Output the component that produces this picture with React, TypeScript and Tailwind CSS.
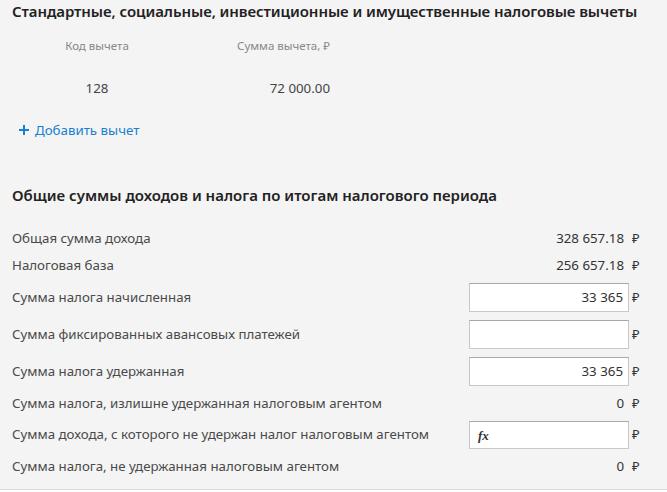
import React from "react";

const font = { fontFamily: '"Noto Sans", "Open Sans", sans-serif' };

type Row = { label: string; value?: string; input?: boolean; fx?: boolean };

const rows: Row[] = [
  { label: "Общая сумма дохода", value: "328 657.18" },
  { label: "Налоговая база", value: "256 657.18" },
  { label: "Сумма налога начисленная", value: "33 365", input: true },
  { label: "Сумма фиксированных авансовых платежей", value: "", input: true },
  { label: "Сумма налога удержанная", value: "33 365", input: true },
  { label: "Сумма налога, излишне удержанная налоговым агентом", value: "0" },
  { label: "Сумма дохода, с которого не удержан налог налоговым агентом", value: "", input: true, fx: true },
  { label: "Сумма налога, не удержанная налоговым агентом", value: "0" },
];

function RowView({ r }: { r: Row }) {
  const h = r.input ? (r.fx ? "h-[28px]" : "h-[29px]") : "h-[19px]";
  return (
    <div className={"flex items-center justify-between " + h}>
      <span className="text-[13.3px] text-[#4a4a4a] whitespace-nowrap">{r.label}</span>
      <div className="flex items-center">
        {r.input ? (
          <div className={"w-[160px] bg-white border border-[#c8c8c8] border-t-[#a8a8a8] flex items-center justify-end px-[5px] relative " + h}>
            {r.fx && (
              <span className="absolute left-[8px] top-[4px] text-[13px] italic font-bold text-[#333]" style={{ fontFamily: '"Liberation Serif", serif' }}>
                fx
              </span>
            )}
            <span className="text-[13.3px] text-[#333]">{r.value}</span>
          </div>
        ) : (
          <span className="text-[13.3px] text-[#333] pr-[5px]">{r.value}</span>
        )}
        <span className="text-[13px] text-[#333] ml-[3px] w-[8px]">₽</span>
      </div>
    </div>
  );
}

export default function App() {
  return (
    <div className="w-[667px] h-[492px] bg-[#f4f4f4] overflow-hidden flex flex-col" style={font}>
      <div className="pl-3 pr-[27px] flex-1">
        <h2 className="text-[15px] font-semibold text-[#222] leading-5 pt-[1px] whitespace-nowrap tracking-[-0.08px]">
          Стандартные, социальные, инвестиционные и имущественные налоговые вычеты
        </h2>
        <div className="grid grid-cols-[170px_148px] mt-[17px]">
          <div className="text-center text-[11.5px] text-[#888] leading-4">Код вычета</div>
          <div className="text-right text-[11.5px] text-[#888] leading-4">Сумма вычета, ₽</div>
        </div>
        <div className="grid grid-cols-[170px_148px] mt-[24px]">
          <div className="text-center text-[13.3px] text-[#444] leading-5">128</div>
          <div className="text-right text-[13.3px] text-[#444] leading-5">72 000.00</div>
        </div>
        <button className="flex items-center gap-[6px] mt-[22px] ml-[7px] text-[#1a7fd0] text-[13.3px] leading-5">
          <svg width="10" height="10" viewBox="0 0 10 10">
            <path d="M5 0v10M0 5h10" stroke="#1a7fd0" strokeWidth="2" />
          </svg>
          <span>Добавить вычет</span>
        </button>
        <h2 className="text-[15px] font-semibold text-[#222] leading-5 mt-[45px] whitespace-nowrap">
          Общие суммы доходов и налога по итогам налогового периода
        </h2>
        <div className="flex flex-col gap-2 mt-[24px]">
          {rows.map((r, i) => (
            <RowView key={i} r={r} />
          ))}
        </div>
      </div>
      <div className="h-[3px] border-t border-[#dcdcdc] bg-white" />
    </div>
  );
}
